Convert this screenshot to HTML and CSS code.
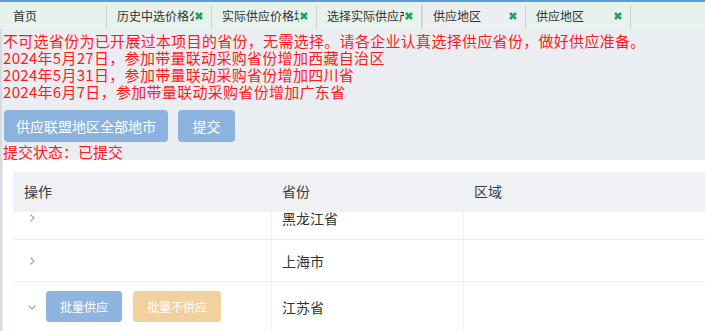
FILE: index.html
```html
<!DOCTYPE html>
<html lang="zh-CN">
<head>
<meta charset="utf-8">
<title>供应地区</title>
<link rel="stylesheet" href="styles.css">
</head>
<body>
<div class="topline"></div>
<nav class="tabbar">
  <div class="tab tab-home"><span class="tab-title">首页</span></div>
  <div class="tab"><span class="tab-title">历史中选价格公示</span><svg class="close" viewBox="0 0 10 10"><path d="M2 2 L8 8 M8 2 L2 8"/></svg></div>
  <div class="tab"><span class="tab-title">实际供应价格填报</span><svg class="close" viewBox="0 0 10 10"><path d="M2 2 L8 8 M8 2 L2 8"/></svg></div>
  <div class="tab"><span class="tab-title">选择实际供应产品</span><svg class="close" viewBox="0 0 10 10"><path d="M2 2 L8 8 M8 2 L2 8"/></svg></div>
  <div class="tab tab-active"><span class="tab-title">供应地区</span><svg class="close" viewBox="0 0 10 10"><path d="M2 2 L8 8 M8 2 L2 8"/></svg></div>
  <div class="tab"><span class="tab-title">供应地区</span><svg class="close" viewBox="0 0 10 10"><path d="M2 2 L8 8 M8 2 L2 8"/></svg></div>
</nav>
<main class="content">
  <div class="notice">
    <p>不可选省份为已开展过本项目的省份，无需选择。请各企业认真选择供应省份，做好供应准备。</p>
    <p>2024年5月27日，参加带量联动采购省份增加西藏自治区</p>
    <p>2024年5月31日，参加带量联动采购省份增加四川省</p>
    <p>2024年6月7日，参加带量联动采购省份增加广东省</p>
  </div>
  <div class="actions">
    <button class="btn btn-wide" disabled>供应联盟地区全部地市</button>
    <button class="btn btn-submit" disabled>提交</button>
  </div>
  <div class="status">提交状态：已提交</div>
  <section class="panel">
    <div class="table">
      <div class="thead">
        <div class="cell">操作</div>
        <div class="cell">省份</div>
        <div class="cell">区域</div>
      </div>
      <div class="tbody">
        <div class="row row-first">
          <div class="cell"><span class="chev"><svg viewBox="0 0 10 10"><path d="M3.5 1.5 L7 5 L3.5 8.5"/></svg></span></div>
          <div class="cell">黑龙江省</div>
          <div class="cell"></div>
        </div>
        <div class="row">
          <div class="cell"><span class="chev"><svg viewBox="0 0 10 10"><path d="M3.5 1.5 L7 5 L3.5 8.5"/></svg></span></div>
          <div class="cell">上海市</div>
          <div class="cell"></div>
        </div>
        <div class="row row-open">
          <div class="cell"><span class="chev"><svg viewBox="0 0 10 10"><path d="M1.5 3.5 L5 7 L8.5 3.5"/></svg></span><button class="mini mini-blue" disabled>批量供应</button><button class="mini mini-orange" disabled>批量不供应</button></div>
          <div class="cell">江苏省</div>
          <div class="cell"></div>
        </div>
      </div>
    </div>
  </section>
</main>
</body>
</html>
```
FILE: styles.css
```css
* { box-sizing: border-box; }
html, body { margin: 0; padding: 0; }
body {
  width: 705px;
  height: 331px;
  overflow: hidden;
  background: #eaedf2;
  font-family: "Noto Sans CJK SC", "Noto Sans", sans-serif;
  color: #333;
}
p { margin: 0; }

.topline { height: 2px; background: #5b9bd8; }

.tabbar {
  height: 27px;
  background: #e6f2eb;
  display: flex;
  align-items: flex-end;
}
.tab {
  height: 24px;
  width: 105px;
  flex: none;
  display: flex;
  align-items: center;
  padding: 0 7px 3px 10px;
  border-right: 1px solid #cbd3d1;
  font-size: 12px;
  color: #333;
}
.tab-home { width: 107px; padding-left: 13px; }
.tab-active { background: #eceef2; border-left: 1px solid #d6dade; width: 104px; padding-left: 10px; }
.tab-title {
  flex: 1;
  min-width: 0;
  white-space: nowrap;
  overflow: hidden;
  text-overflow: clip;
  line-height: 16px;
}
.close {
  width: 10px;
  height: 10px;
  flex: none;
  fill: none;
  stroke: #1ca35f;
  stroke-width: 2.6;
}

.content {
  border-left: 2px solid #d7dadf;
  padding-left: 1px;
}
.notice {
  padding-top: 3px;
  color: #ff1a1a;
  font-size: 15px;
  line-height: 17px;
  letter-spacing: 0.3px;
  white-space: nowrap;
}
.actions {
  display: flex;
  gap: 10px;
  margin-top: 10px;
  padding-left: 1px;
}
.btn {
  height: 32px;
  border: none;
  border-radius: 4px;
  background: #8cb3de;
  color: #fff;
  font-family: inherit;
  font-size: 14px;
  padding: 0 12px;
}
.btn-submit { padding: 0 14px; min-width: 57px; }
.status {
  margin-top: 2px;
  color: #ff1a1a;
  font-size: 15px;
  line-height: 16px;
}

.panel {
  background: #fff;
  padding: 12px 0 0 10px;
  height: 200px;
}
.table { font-size: 14px; color: #333; }
.thead, .row {
  display: grid;
  grid-template-columns: 258px 192px 1fr;
}
.thead {
  height: 40px;
  background: #f0f1f5;
  position: relative;
  z-index: 1;
}
.thead .cell { color: #3a3a3a; padding-bottom: 2px; }
.cell {
  display: flex;
  align-items: center;
  padding: 0 10px;
  white-space: nowrap;
}
.cell:first-child { padding-left: 11px; }
.cell + .cell { border-left: 1px solid #eef0f4; }
.tbody { height: 200px; overflow: hidden; }
.row { height: 42px; border-bottom: 1px solid #eceef4; }
.row-first { margin-top: -15px; height: 43px; }
.row-open { height: 50px; }
.chev {
  width: 16px;
  height: 16px;
  display: flex;
  align-items: center;
  justify-content: center;
  margin-right: 6px;
}
.chev svg {
  width: 10px;
  height: 10px;
  fill: none;
  stroke: #9ea3aa;
  stroke-width: 1.1;
}
.mini {
  height: 31px;
  border-radius: 3px;
  font-family: inherit;
  font-size: 12px;
  color: #fff;
  padding: 0 13px;
  border: 1px solid transparent;
}
.mini-blue { background: #8fb4e0; border-color: #8fb4e0; }
.mini-orange { background: #f3d19e; border-color: #f3d19e; margin-left: 11px; }
```
